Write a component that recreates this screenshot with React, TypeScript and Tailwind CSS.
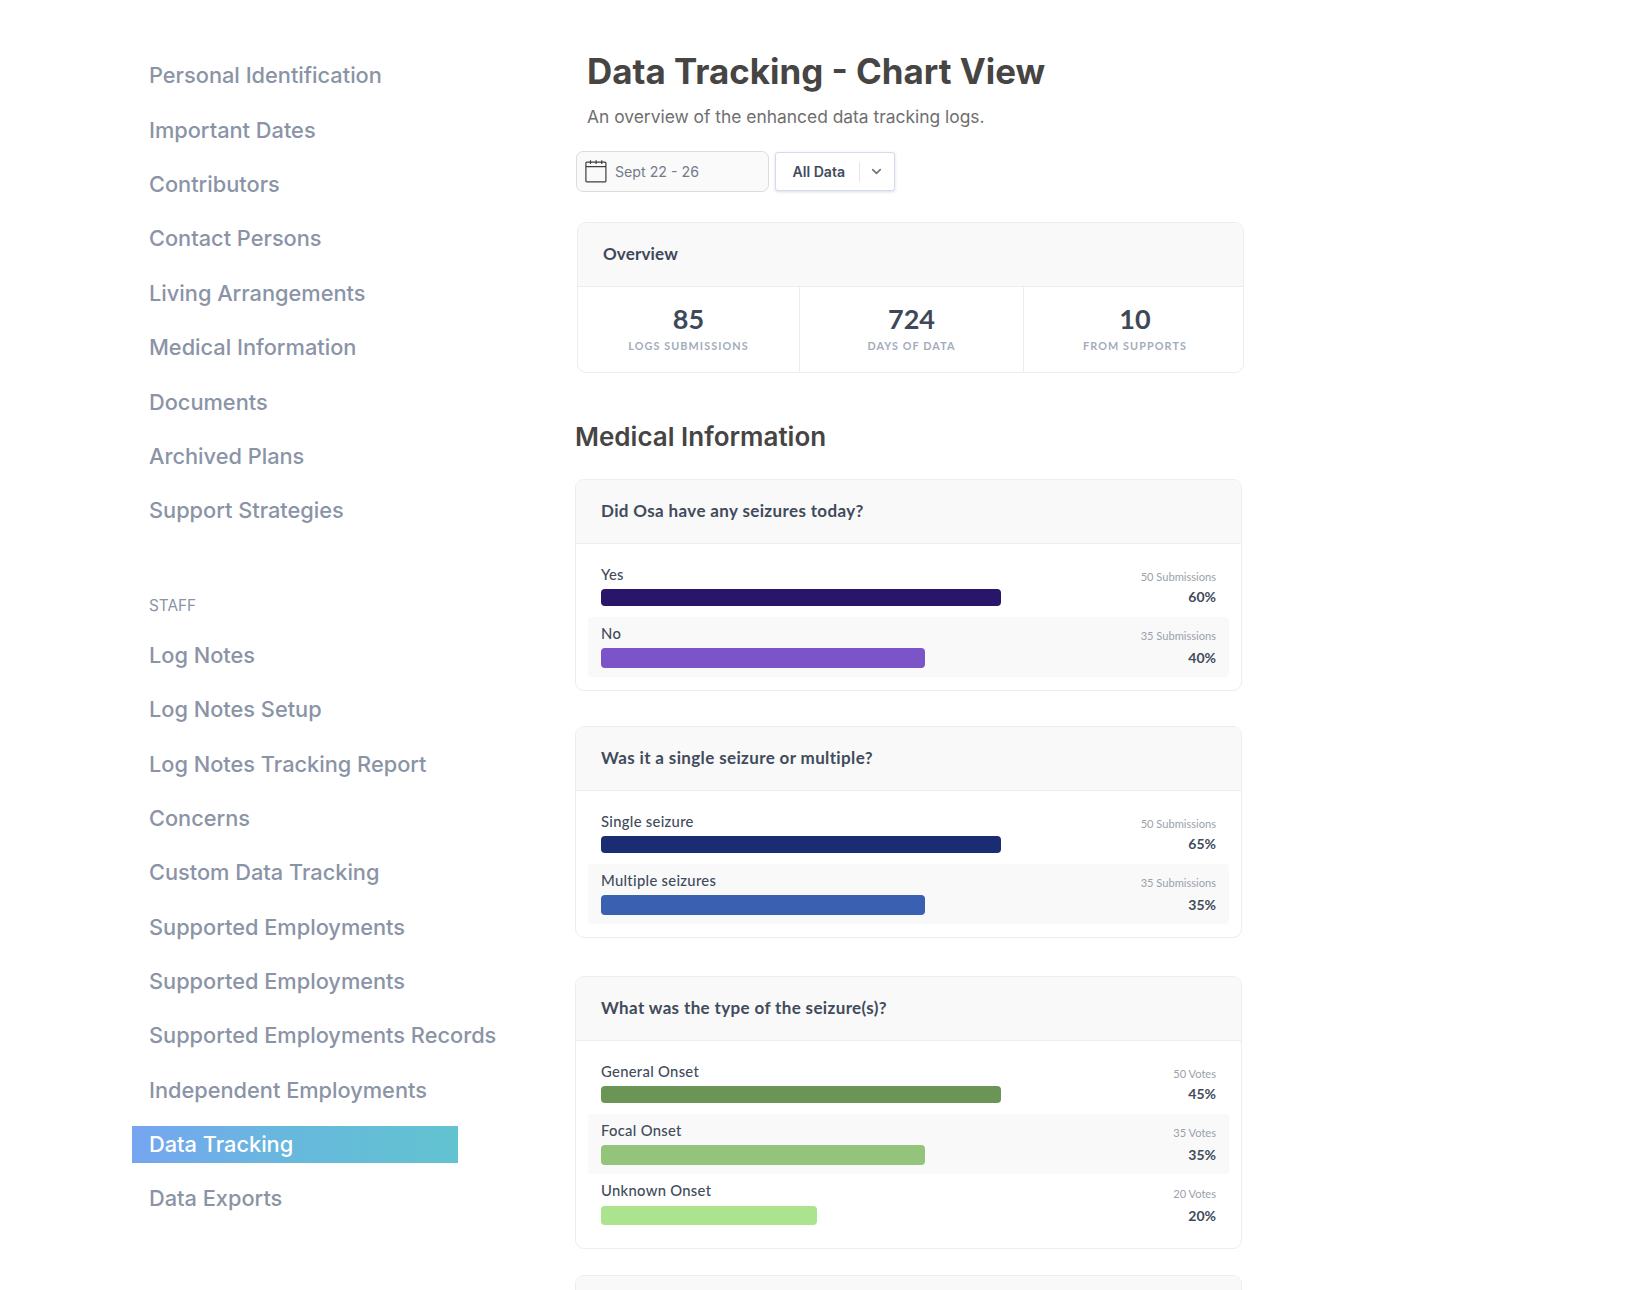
import { ChevronDown } from "lucide-react";
import clsx from "clsx";

const mainNav = [
  "Personal Identification",
  "Important Dates",
  "Contributors",
  "Contact Persons",
  "Living Arrangements",
  "Medical Information",
  "Documents",
  "Archived Plans",
  "Support Strategies",
];

const staffNav = [
  "Log Notes",
  "Log Notes Setup",
  "Log Notes Tracking Report",
  "Concerns",
  "Custom Data Tracking",
  "Supported Employments",
  "Supported Employments",
  "Supported Employments Records",
  "Independent Employments",
  "Data Tracking",
  "Data Exports",
];

const stats = [
  { value: "85", label: "LOGS SUBMISSIONS" },
  { value: "724", label: "DAYS OF DATA" },
  { value: "10", label: "FROM SUPPORTS" },
];

type Answer = {
  label: string;
  count: string;
  percent: string;
  bar: string;
};

const seizures: Answer[] = [
  { label: "Yes", count: "50 Submissions", percent: "60%", bar: "w-[400px] h-[17px] bg-[#29166b]" },
  { label: "No", count: "35 Submissions", percent: "40%", bar: "w-[324px] h-[19.5px] bg-[#7b54c7]" },
];

const amount: Answer[] = [
  { label: "Single seizure", count: "50 Submissions", percent: "65%", bar: "w-[400px] h-[17px] bg-[#1a2d73]" },
  { label: "Multiple seizures", count: "35 Submissions", percent: "35%", bar: "w-[324px] h-[19.5px] bg-[#3a60b2]" },
];

const types: Answer[] = [
  { label: "General Onset", count: "50 Votes", percent: "45%", bar: "w-[400px] h-[17px] bg-[#6a9557]" },
  { label: "Focal Onset", count: "35 Votes", percent: "35%", bar: "w-[324px] h-[19.5px] bg-[#94c47b]" },
  { label: "Unknown Onset", count: "20 Votes", percent: "20%", bar: "w-[216px] h-[19.5px] bg-[#abe38e]" },
];

function NavList({ items, active }: { items: string[]; active?: string }) {
  return (
    <ul>
      {items.map((item, i) => (
        <li key={i} className="flex h-[54.35px] items-center">
          <a
            className={clsx(
              "flex h-[37px] w-[326px] shrink-0 items-center whitespace-nowrap pb-[0.8px] pl-[17px] text-[21.77px] font-medium",
              item === active
                ? "bg-linear-to-r from-[#76a5f1] via-[#66b9dc] to-[#62c3d0] text-white"
                : "text-[#8a94a6]",
            )}
          >
            {item}
          </a>
        </li>
      ))}
    </ul>
  );
}

function CalendarIcon() {
  return (
    <svg width="22" height="23" viewBox="0 0 22 23" fill="none" stroke="#3d3d3d" strokeWidth="1.2">
      <rect x="0.9" y="2.1" width="20" height="19.8" rx="1" />
      <path d="M1 6.7h20M5.5 0.3v3.8M11.1 0.3v3.8M16.7 0.3v3.8" />
    </svg>
  );
}

function QuestionCard({ title, answers, className }: { title: string; answers: Answer[]; className?: string }) {
  return (
    <section
      className={clsx(
        "w-[667px] overflow-hidden rounded-[9px] border border-[#ededee] font-['Lato',sans-serif] text-[#414b5b]",
        className,
      )}
    >
      <h3 className="flex h-16 items-center border-b border-[#ededee] bg-[#f9f9f9] pb-px pl-[25px] text-[17px] font-bold tracking-[0.36px]">
        {title}
      </h3>
      <div className="px-3 pt-3">
        {answers.map((a, i) => (
          <div
            key={a.label}
            className={clsx("flex h-[60.5px] justify-between rounded px-[13px]", i % 2 === 1 && "bg-[#f9f9f9]")}
          >
            <div>
              <div
                className={clsx(
                  "text-[14.8px] font-medium leading-5 tracking-[0.3px]",
                  i === 0 ? "h-[33px] pt-[7.5px]" : "h-[31.5px] pt-1.5",
                )}
              >
                {a.label}
              </div>
              <div className={clsx("rounded", a.bar)} />
            </div>
            <div className="text-right">
              <div
                className={clsx(
                  "text-[11.1px] leading-5 text-[#9aa1ac]",
                  i === 0 ? "h-[33px] pt-[11px]" : "h-[31.5px] pt-[9.5px]",
                )}
              >
                {a.count}
              </div>
              <div className={clsx("text-[14px] font-bold", i === 0 ? "leading-4" : "leading-[19px]")}>
                {a.percent}
              </div>
            </div>
          </div>
        ))}
      </div>
    </section>
  );
}

export default function App() {
  return (
    <div className="flex h-[1290px] w-[1642px] overflow-hidden bg-white font-['Inter',sans-serif]">
      <aside className="w-[444px] shrink-0 pl-[132px] pt-[49px]">
        <NavList items={mainNav} />
        <div className="flex h-[90.5px] items-end pb-[13px] pl-[17px] text-[15.3px] leading-5 text-[#8a94a6]">STAFF</div>
        <NavList items={staffNav} active="Data Tracking" />
      </aside>

      <main className="ml-[131px] w-[670px] shrink-0 pt-[49px]">
        <header className="pl-3">
          <h1 className="whitespace-nowrap text-[34.9px] font-bold leading-[44px] text-[#464544]">
            Data Tracking - Chart View
          </h1>
          <p className="mt-3 whitespace-nowrap text-[17.4px] leading-6 text-[#6f6f6f]">
            An overview of the enhanced data tracking logs.
          </p>
        </header>

        <div className="mt-[22px] flex items-center gap-1.5 pl-px">
          <div className="flex h-[41px] w-[193px] items-center gap-2 rounded-[7px] border border-[#dcdcdd] bg-[#fafafa] pl-2 text-[14.2px] text-[#737b8b]">
            <CalendarIcon />
            Sept 22 - 26
          </div>
          <button className="flex h-[39px] w-[120px] items-center rounded-[3px] border border-[#d5dbea] bg-white pl-[16.5px] text-[14.1px] font-semibold text-[#414b5e] shadow-[0_1px_3px_rgba(120,140,180,0.3)]">
            All Data
            <span className="ml-3.5 h-5 w-px bg-[#e4e5e9]" />
            <ChevronDown className="ml-[9px] size-[15px]" strokeWidth={2.5} color="#6d7178" />
          </button>
        </div>

        <section className="ml-0.5 mt-[30px] h-[151px] w-[667px] overflow-hidden rounded-[9px] border border-[#ededee] font-['Lato',sans-serif] text-[#3f4858]">
          <h2 className="flex h-16 items-center border-b border-[#ededee] bg-[#f9f9f9] pb-0.5 pl-[25px] text-[17px] font-bold tracking-[0.15px]">
            Overview
          </h2>
          <div className="grid h-[85px] grid-cols-[222px_224px_1fr] divide-x divide-[#ededee]">
            {stats.map((s, i) => (
              <div key={s.label} className={clsx("flex flex-col items-center pt-4", i === 2 && "pl-[3px]")}>
                <div className="text-[27px] font-bold leading-8">{s.value}</div>
                <div className="mt-[3px] text-[10.8px] font-bold leading-4 tracking-[1.1px] text-[#a3acba]">{s.label}</div>
              </div>
            ))}
          </div>
        </section>

        <h2 className="mt-11 text-[26px] font-semibold leading-10 text-[#464544]">Medical Information</h2>

        <QuestionCard className="mt-[22px] h-[212px]" title="Did Osa have any seizures today?" answers={seizures} />
        <QuestionCard className="mt-[35px] h-[212px]" title="Was it a single seizure or multiple?" answers={amount} />
        <QuestionCard className="mt-[38px] h-[273px]" title="What was the type of the seizure(s)?" answers={types} />
        <QuestionCard className="mt-[26px]" title="" answers={[]} />
      </main>
    </div>
  );
}
